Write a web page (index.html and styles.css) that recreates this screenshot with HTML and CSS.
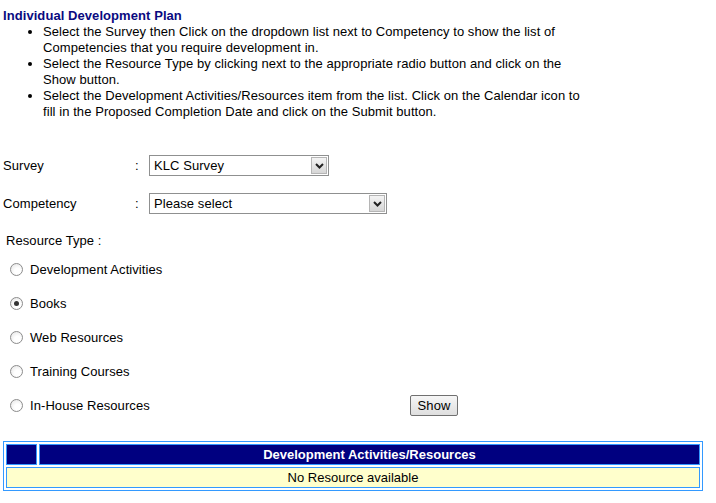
FILE: index.html
```html
<!DOCTYPE html>
<html>
<head>
<meta charset="utf-8">
<link rel="stylesheet" href="styles.css">
</head>
<body>
<div class="page">
  <div class="title">Individual Development Plan</div>
  <ul class="steps">
    <li>Select the Survey then Click on the dropdown list next to Competency to show the list of Competencies that you require development in.</li>
    <li>Select the Resource Type by clicking next to the appropriate radio button and click on the Show button.</li>
    <li>Select the Development Activities/Resources item from the list. Click on the Calendar icon to fill in the Proposed Completion Date and click on the Submit button.</li>
  </ul>

  <div class="field field-survey">
    <span class="label">Survey</span>
    <span class="colon">:</span>
    <div class="select select-survey">
      <span class="val">KLC Survey</span>
      <span class="arrow"><svg width="9" height="6" viewBox="0 0 9 6"><path d="M1 1 L4.5 4.5 L8 1" fill="none" stroke="#222" stroke-width="2"/></svg></span>
    </div>
  </div>
  <div class="field field-comp">
    <span class="label">Competency</span>
    <span class="colon">:</span>
    <div class="select select-comp">
      <span class="val">Please select</span>
      <span class="arrow"><svg width="9" height="6" viewBox="0 0 9 6"><path d="M1 1 L4.5 4.5 L8 1" fill="none" stroke="#222" stroke-width="2"/></svg></span>
    </div>
  </div>

  <div class="rtype">Resource Type :</div>
  <div class="radios">
    <div class="radio-row"><span class="radio"></span><span>Development Activities</span></div>
    <div class="radio-row"><span class="radio checked"></span><span>Books</span></div>
    <div class="radio-row"><span class="radio"></span><span>Web Resources</span></div>
    <div class="radio-row"><span class="radio"></span><span>Training Courses</span></div>
    <div class="radio-row last"><span class="radio"></span><span class="rlabel">In-House Resources</span><span class="btn">Show</span></div>
  </div>

  <table class="res">
    <tr class="head"><td class="c1"></td><td>Development Activities/Resources</td></tr>
    <tr class="body"><td colspan="2">No Resource available</td></tr>
  </table>
</div>
</body>
</html>
```
FILE: styles.css
```css
html, body {
  margin: 0;
  padding: 0;
  background: #fff;
}
body {
  font-family: "Liberation Sans", Arial, sans-serif;
  font-size: 13px;
  letter-spacing: 0.07px;
  color: #000;
}
.page {
  padding: 8px 0 0 3px;
}
.title {
  font-weight: bold;
  color: #0a0a80;
  line-height: 16px;
}
.steps {
  margin: 0;
  padding: 0 0 0 40px;
  width: 550px;
  line-height: 16px;
}
.field {
  display: flex;
  align-items: center;
  height: 21px;
}
.field-survey { margin-top: 35px; }
.field-comp { margin-top: 17px; }
.label {
  width: 132px;
}
.colon {
  width: 14px;
}
.select {
  display: flex;
  align-items: stretch;
  height: 19px;
  border: 1px solid #8f9090;
  box-sizing: content-box;
}
.select-survey { width: 178px; }
.select-comp { width: 236px; }
.select .val {
  flex: 1;
  padding-left: 4px;
  line-height: 19px;
}
.select .arrow {
  width: 14px;
  margin: 1px;
  border: 1px solid #b5b5b5;
  background: linear-gradient(#f4f4f4, #d6d6d6);
  display: flex;
  align-items: center;
  justify-content: center;
}
.rtype {
  margin-top: 19px;
  padding-left: 3px;
  line-height: 16px;
}
.radios {
  margin-top: 3px;
}
.radio-row {
  display: flex;
  align-items: center;
  height: 34px;
  padding-left: 7px;
}
.radio {
  width: 11px;
  height: 11px;
  border: 1px solid #8c8c8c;
  border-radius: 50%;
  background: radial-gradient(circle at 60% 65%, #ffffff 30%, #e2e2e2 100%);
  margin-right: 7px;
  display: flex;
  align-items: center;
  justify-content: center;
}
.radio.checked::after {
  content: "";
  width: 5px;
  height: 5px;
  border-radius: 50%;
  background: #333;
}
.rlabel {
  width: 380px;
}
.btn {
  display: inline-block;
  width: 46px;
  height: 19px;
  line-height: 19px;
  text-align: center;
  border: 1px solid #707070;
  border-radius: 2px;
  background: linear-gradient(#f6f6f6, #dedede);
}
.res {
  margin-top: 19px;
  width: 700px;
  border: 1px solid #3399ff;
  border-spacing: 2px;
  letter-spacing: 0;
}
.res td {
  border: 1px solid #3399ff;
  padding: 0;
  text-align: center;
}
.res .head td {
  background: #000080;
  color: #fff;
  font-weight: bold;
  height: 19px;
}
.res .head td.c1 {
  width: 29px;
}
.res .body td {
  background: #ffffcc;
  height: 19px;
}
```
